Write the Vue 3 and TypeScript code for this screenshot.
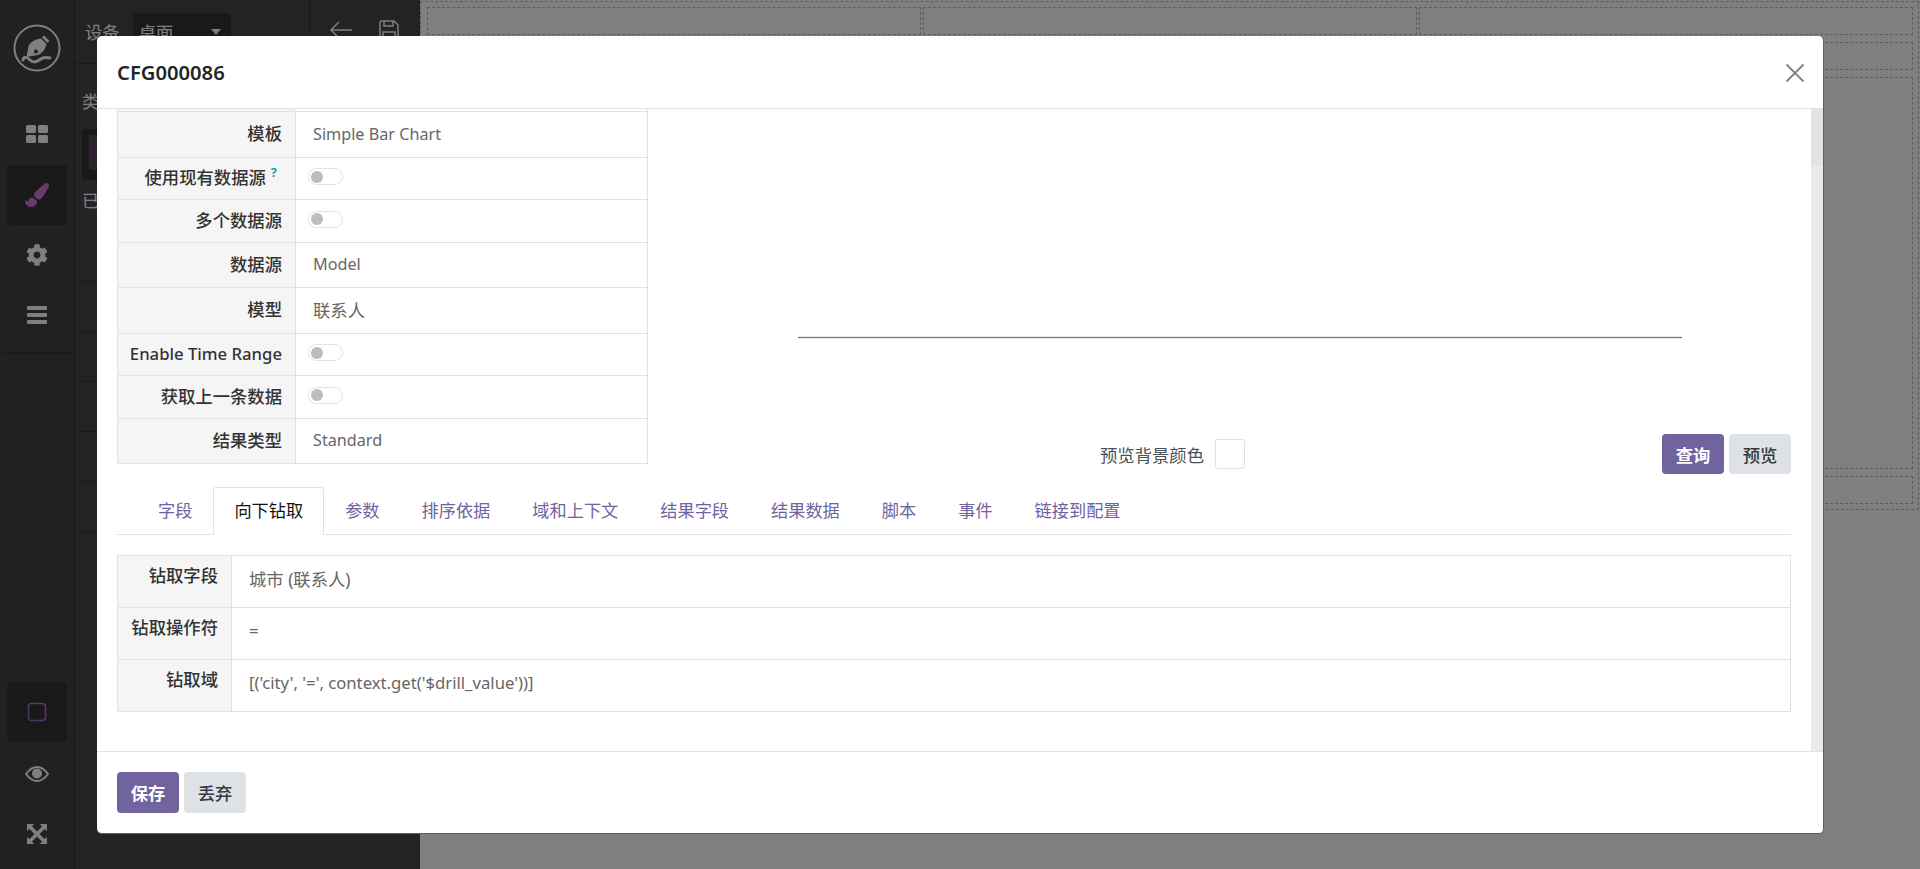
<script setup lang="ts">
interface FormRow { label: string; value?: string; toggle?: boolean; help?: boolean; height: number }
const formRows: FormRow[] = [
  { label: '模板', value: 'Simple Bar Chart', height: 46 },
  { label: '使用现有数据源', toggle: true, help: true, height: 42 },
  { label: '多个数据源', toggle: true, height: 43 },
  { label: '数据源', value: 'Model', height: 45 },
  { label: '模型', value: '联系人', height: 46 },
  { label: 'Enable Time Range', toggle: true, height: 42 },
  { label: '获取上一条数据', toggle: true, height: 43 },
  { label: '结果类型', value: 'Standard', height: 45 },
]
const isLatin = (text?: string): boolean => !!text && /^[\x20-\x7e]+$/.test(text)
const tabs = ['字段', '向下钻取', '参数', '排序依据', '域和上下文', '结果字段', '结果数据', '脚本', '事件', '链接到配置']
const drillRows = [
  { label: '钻取字段', value: '城市 (联系人)' },
  { label: '钻取操作符', value: '=' },
  { label: '钻取域', value: "[('city', '=', context.get('$drill_value'))]" },
]
const panelLines = [0, 1, 2, 3, 4, 5]
</script>

<template>
  <div class="page">
    <aside class="sidebar">
      <div class="side-top">
        <div class="logo">
          <svg width="48" height="48" viewBox="0 0 48 48" fill="none">
            <circle cx="24" cy="24" r="22.5" stroke="#fff" stroke-width="2" />
            <path d="M31 11.5 L36.5 17 L34.5 19 L29 13.5 Z" fill="#fff" />
            <path d="M28 14.5 L33.5 20 C32.5 25 29.5 29 25 31 L13.5 33 L15.5 22 C17.5 18 22.5 15 28 14.5 Z M23 25.5 a2 2 0 1 0 .01 0 Z" fill="#fff" fill-rule="evenodd" />
            <path d="M10 36 C11 32 14 33 17 36 C20 39 24 38 27 35.5 C30 33 33 33 37 34" stroke="#fff" stroke-width="3" stroke-linecap="round" />
          </svg>
        </div>
        <div class="side-item">
          <svg width="24" height="20" viewBox="0 0 24 20" fill="#fff">
            <rect x="1" y="1" width="10" height="8" rx="1.5" /><rect x="13" y="1" width="10" height="8" rx="1.5" />
            <rect x="1" y="11" width="10" height="8" rx="1.5" /><rect x="13" y="11" width="10" height="8" rx="1.5" />
          </svg>
        </div>
        <div class="side-item active">
          <svg width="24" height="24" viewBox="0 0 512 512" fill="#d676dc">
            <path d="M167.02 309.34c-40.12 2.58-76.53 17.86-97.19 72.3-2.35 6.21-8 9.98-14.59 9.98-11.11 0-45.46-27.67-55.25-34.35C0 439.62 37.93 512 128 512c75.86 0 128-43.77 128-120.19 0-3.11-.65-6.08-.97-9.13l-88.01-73.34zM457.89 0c-15.16 0-29.37 6.71-40.21 16.45C213.27 199.05 192 203.34 192 257.09c0 13.7 3.25 26.76 8.73 38.7l63.82 53.18c7.21 1.8 14.64 3.03 22.39 3.03 62.11 0 98.11-45.47 211.16-256.46 7.38-14.35 13.9-29.85 13.9-45.99C512 20.64 486 0 457.89 0z" />
          </svg>
        </div>
        <div class="side-item">
          <svg width="22" height="22" viewBox="0 0 512 512" fill="#fff">
            <path d="M487.4 315.7l-42.6-24.6c4.3-23.2 4.3-47 0-70.2l42.6-24.6c4.9-2.8 7.1-8.6 5.5-14-11.1-35.6-30-67.8-54.7-94.6-3.8-4.1-10-5.1-14.8-2.3L380.8 110c-17.9-15.4-38.5-27.3-60.8-35.1V25.8c0-5.6-3.9-10.5-9.4-11.7-36.7-8.2-74.3-7.8-109.2 0-5.5 1.2-9.4 6.1-9.4 11.7V75c-22.2 7.9-42.8 19.8-60.8 35.1L88.7 85.5c-4.9-2.8-11-1.9-14.8 2.3-24.7 26.7-43.6 58.9-54.7 94.6-1.7 5.4.6 11.2 5.5 14L67.3 221c-4.3 23.2-4.3 47 0 70.2l-42.6 24.6c-4.9 2.8-7.1 8.6-5.5 14 11.1 35.6 30 67.8 54.7 94.6 3.8 4.1 10 5.1 14.8 2.3l42.6-24.6c17.9 15.4 38.5 27.3 60.8 35.1v49.2c0 5.6 3.9 10.5 9.4 11.7 36.7 8.2 74.3 7.8 109.2 0 5.5-1.2 9.4-6.1 9.4-11.7v-49.2c22.2-7.9 42.8-19.8 60.8-35.1l42.6 24.6c4.9 2.8 11 1.9 14.8-2.3 24.7-26.7 43.6-58.9 54.7-94.6 1.5-5.5-.7-11.3-5.6-14.1zM256 336c-44.1 0-80-35.9-80-80s35.9-80 80-80 80 35.9 80 80-35.9 80-80 80z" />
          </svg>
        </div>
        <div class="side-item">
          <svg width="22" height="18" viewBox="0 0 22 18" fill="#fff">
            <rect x="1" y="0" width="20" height="4" rx="1" /><rect x="1" y="7" width="20" height="4" rx="1" /><rect x="1" y="14" width="20" height="4" rx="1" />
          </svg>
        </div>
      </div>
      <div class="side-bottom">
        <div class="side-item active">
          <svg width="20" height="20" viewBox="0 0 20 20" fill="none">
            <defs>
              <linearGradient id="sq" x1="0" y1="1" x2="1" y2="0">
                <stop offset="0" stop-color="#7b6fe0" />
                <stop offset="1" stop-color="#e060c0" />
              </linearGradient>
            </defs>
            <rect x="1.5" y="1.5" width="17" height="17" rx="3" stroke="url(#sq)" stroke-width="1.6" />
          </svg>
        </div>
        <div class="side-item">
          <svg width="24" height="16" viewBox="0 0 24 16" fill="none">
            <path d="M1 8 C5 2.5 8 1 12 1 C16 1 19 2.5 23 8 C19 13.5 16 15 12 15 C8 15 5 13.5 1 8 Z" stroke="#fff" stroke-width="2" />
            <circle cx="12" cy="7.5" r="5" fill="#fff" />
          </svg>
        </div>
        <div class="side-item">
          <svg width="22" height="22" viewBox="0 0 22 22" fill="#fff">
            <path d="M1 1h7L6 3.500 11 8.500 16 3.500 14 1h7v7l-2.500-2L13.500 11l5 5 2.500-2v7h-7l2-2.500-5-5-5 5 2 2.500H1v-7l2.500 2 5-5-5-5L1 8z" />
          </svg>
        </div>
      </div>
    </aside>

    <section class="panel">
      <div class="toolbar">
        <div class="device">
          <span>设备</span>
          <div class="device-select"><span>桌面</span><i class="caret"></i></div>
        </div>
        <div class="toolbar-actions">
          <svg width="24" height="20" viewBox="0 0 24 20" fill="none" stroke="#fff" stroke-width="1.500">
            <path d="M23 10H2M10 2 2 10l8 8" />
          </svg>
          <svg width="20" height="20" viewBox="0 0 20 20" fill="none" stroke="#fff" stroke-width="1.500">
            <path d="M1 3a2 2 0 0 1 2-2h12l4 4v12a2 2 0 0 1-2 2H3a2 2 0 0 1-2-2zM5 1v5h9V1M4 19v-7h12v7" />
          </svg>
        </div>
      </div>
      <div class="panel-body">
        <div class="panel-label">类</div>
        <div class="panel-card"><div class="panel-thumb"></div></div>
        <div class="panel-label">已</div>
      </div>
      <div class="panel-lines">
        <div v-for="line in panelLines" :key="line" class="panel-line"></div>
      </div>
    </section>

    <main class="canvas">
      <div class="outer">
        <div class="drop cols">
          <div class="drop-col"></div><div class="drop-col"></div><div class="drop-col"></div>
        </div>
        <div class="drop short"></div>
        <div class="drop tall"></div>
        <div class="drop short"></div>
      </div>
    </main>

    <div class="overlay">
      <div class="modal">
        <header class="modal-head">
          <h4>CFG000086</h4>
          <svg class="close" width="20" height="20" viewBox="0 0 20 20" stroke="#808080" stroke-width="1.800" fill="none">
            <path d="M1.500 1.500 18.500 18.500M18.500 1.500 1.500 18.500" />
          </svg>
        </header>

        <div class="modal-body">
          <div class="content">
            <div class="top">
              <table class="form">
                <colgroup><col class="form-label-col" /><col /></colgroup>
                <tbody>
                  <tr class="stub"><th></th><td></td></tr>
                  <tr v-for="row in formRows" :key="row.label" :style="{ height: row.height + 'px' }">
                    <th>
                      <span class="label-text" :class="{ 'latin-label': isLatin(row.label) }">{{ row.label }}</span><sup v-if="row.help" class="help">?</sup>
                    </th>
                    <td>
                      <span v-if="row.toggle" class="toggle"><i></i></span>
                      <span v-else class="value" :class="{ latin: isLatin(row.value) }">{{ row.value }}</span>
                    </td>
                  </tr>
                </tbody>
              </table>
              <div class="preview">
                <div class="chart"><div class="axis"></div></div>
                <div class="controls">
                  <div class="bg-control">
                    <span>预览背景颜色</span>
                    <span class="swatch"></span>
                  </div>
                  <div class="actions">
                    <button class="btn primary">查询</button>
                    <button class="btn secondary">预览</button>
                  </div>
                </div>
              </div>
            </div>

            <nav class="tabs">
              <a v-for="(tab, i) in tabs" :key="tab" class="tab" :class="{ current: i === 1 }">{{ tab }}</a>
            </nav>

            <table class="drill">
              <colgroup><col class="drill-label-col" /><col /></colgroup>
              <tbody>
                <tr v-for="row in drillRows" :key="row.label">
                  <th>{{ row.label }}</th>
                  <td><span :class="{ 'latin-mono': isLatin(row.value) }">{{ row.value }}</span></td>
                </tr>
              </tbody>
            </table>
          </div>
          <div class="scrollbar"><div class="thumb"></div></div>
        </div>

        <footer class="modal-foot">
          <button class="btn primary">保存</button>
          <button class="btn secondary">丢弃</button>
        </footer>
      </div>
    </div>
  </div>
</template>

<style>
html, body { margin: 0; padding: 0; overflow: hidden; }
</style>

<style scoped>
.page {
  position: relative;
  display: flex;
  width: 1920px;
  height: 869px;
  overflow: hidden;
  background: #fff;
  font-family: "Noto Sans", "Noto Sans CJK SC", sans-serif;
  font-size: 17.33px;
  color: #666;
}
.latin { font-size: 16.2px; }
.latin-label { font-size: 16.7px; }
.latin-mono { font-size: 16.7px; }
.sidebar {
  box-sizing: border-box;
  width: 75px;
  flex: none;
  display: flex;
  flex-direction: column;
  justify-content: space-between;
  background: #424242;
  border-right: 1px solid #333;
}
.side-top { border-bottom: 2px solid #383838; height: 352px; margin: 0 1px; }
.logo { height: 95px; display: flex; align-items: center; justify-content: center; padding-top: 1px; box-sizing: border-box; }
.side-item {
  width: 60px;
  height: 60px;
  margin: 0 auto;
  display: flex;
  align-items: center;
  justify-content: center;
  border-radius: 3px;
}
.side-item.active { background: #333; }
.side-top .side-item:nth-child(2) { margin-top: 9px; }
.side-top .side-item:nth-child(3) { margin-top: 1px; }
.side-bottom { padding-bottom: 5px; }
.side-bottom .side-item:first-child { margin-bottom: 2px; }

.panel {
  position: relative;
  box-sizing: border-box;
  width: 345px;
  flex: none;
  background: #464646;
  color: #fff;
}
.toolbar {
  box-sizing: border-box;
  height: 64px;
  display: flex;
  border-bottom: 1px solid #333;
}
.device {
  box-sizing: border-box;
  width: 235px;
  display: flex;
  align-items: center;
  padding: 2px 0 3px 10px;
  gap: 13px;
  border-right: 1px solid #333;
}
.device-select {
  box-sizing: border-box;
  width: 98px;
  height: 36px;
  display: flex;
  align-items: center;
  justify-content: space-between;
  padding: 0 10px 0 6px;
  background: #333;
  border-radius: 3px;
}
.caret { border: 5px solid transparent; border-top: 6px solid #fff; margin-top: 6px; }
.toolbar-actions { display: flex; align-items: center; gap: 26px; padding: 0 0 4px 19px; }
.panel-body { box-sizing: border-box; height: 168px; padding: 25px 7px 0; background: #484848; }
.panel-label { line-height: 24px; }
.panel-card { height: 51px; margin: 16px 0 8px; padding: 6px 7px; background: #333; border-radius: 3px; box-sizing: border-box; }
.panel-thumb { width: 30px; height: 35px; background: #5e445f; border-radius: 3px; }
.panel-lines { padding-top: 49px; }
.panel-line { height: 49px; border-top: 1px solid #363636; }

.canvas { flex: 1; min-width: 0; padding: 1px 1px 0 0; }
.outer {
  box-sizing: border-box;
  height: 509px;
  border: 1px dashed #bbb;
  padding: 5px 5px 5px 6px;
  display: flex;
  flex-direction: column;
  gap: 7px;
}
.drop { box-sizing: border-box; border: 1px dashed #bbb; height: 28px; flex: none; }
.drop.tall { height: 392px; }
.drop.cols { display: flex; border: 0; gap: 2px; }
.drop-col { flex: 1; border: 1px dashed #bbb; }

.overlay {
  position: absolute;
  inset: 0;
  background: rgba(0, 0, 0, .5);
}
.modal {
  box-sizing: border-box;
  position: absolute;
  left: 97px;
  top: 36px;
  width: 1727px;
  height: 798px;
  display: flex;
  flex-direction: column;
  background: #fff;
  border-radius: 5px;
  border-right: 1px solid #5e5e5e;
  border-bottom: 1px solid #5e5e5e;
  overflow: hidden;
}
.modal-head {
  box-sizing: border-box;
  height: 73px;
  flex: none;
  display: flex;
  align-items: center;
  justify-content: space-between;
  padding: 0 18px 0 20px;
  border-bottom: 1px solid #dee2e6;
}
.modal-head h4 {
  margin: 0;
  font-size: 20.2px;
  font-weight: 600;
  color: #212529;
}
.close { display: block; margin-top: 1px; }
.modal-body { flex: 1; min-height: 0; display: flex; }
.content { flex: 1; min-width: 0; padding: 0 20px; }
.scrollbar { width: 12px; flex: none; background: #eaeaea; }
.thumb { height: 57px; background: #e3e3e3; }

.top { display: flex; height: 365px; }
.form, .drill { border-collapse: collapse; table-layout: fixed; }
.form { width: 531px; height: fit-content; flex: none; }
.form-label-col { width: 178px; }
.form tr.stub { height: 2px; }
.form tr.stub th, .form tr.stub td { padding: 0; border-top: 0; height: 2px; line-height: 0; font-size: 0; }
th, td { border: 1px solid #e2e2e2; }
th {
  background: #f5f5f5;
  text-align: right;
  font-weight: 500;
  color: #333;
  padding: 0 13px 0 0;
}
.form th { padding-bottom: 4px; }
.form td { padding: 0 0 0 17px; font-weight: 400; color: #666; }
.form tr th { white-space: nowrap; }
.value { display: block; margin-top: -2px; }
.help { color: #17a2b8; font-size: 13px; font-weight: 700; vertical-align: 7px; line-height: 0; margin-left: 5px; margin-right: 5px; }
.toggle {
  box-sizing: border-box;
  display: flex;
  align-items: center;
  width: 35px;
  height: 17px;
  margin: 0 0 4px -5px;
  padding-left: 2px;
  background: #fff;
  border: 1px solid #e2e2e2;
  border-radius: 9px;
}
.toggle i { width: 12px; height: 12px; border-radius: 50%; background: #bdbdbd; }

.preview { flex: 1; min-width: 0; padding-left: 40px; display: flex; flex-direction: column; }
.chart { height: 325px; box-sizing: border-box; padding: 227px 109px 0 110px; flex: none; }
.axis { height: 1px; background: #777; border-top: 1px solid #e6e6e6; border-bottom: 1px solid #e6e6e6; }
.controls { display: flex; align-items: center; height: 40px; }
.bg-control { display: flex; align-items: center; gap: 11px; margin-left: 412px; color: #495057; }
.swatch { box-sizing: border-box; width: 30px; height: 30px; border: 1px solid #dee2e6; border-radius: 3px; background: #fff; }
.actions { margin-left: auto; display: flex; gap: 5px; }
.btn {
  box-sizing: border-box;
  width: 62px;
  height: 40px;
  padding: 0;
  border: 0;
  border-radius: 4px;
  font: inherit;
  font-weight: 600;
}
.btn.primary { background: #71639e; color: #fff; }
.btn.secondary { background: #dee2e6; color: #343a40; font-weight: 500; }

.tabs {
  display: flex;
  box-sizing: border-box;
  height: 48px;
  margin-top: 13px;
  padding-left: 20px;
  border-bottom: 1px solid #dee2e6;
  font-size: 17.2px;
}
.tab {
  box-sizing: border-box;
  height: 48px;
  padding: 0 20px;
  line-height: 46px;
  border: 1px solid transparent;
  border-radius: 3px 3px 0 0;
  color: #71639e;
}
.tab.current { color: #111; background: #fff; border-color: #dee2e6 #dee2e6 #fff; }

.drill { width: 100%; margin-top: 20px; }
.drill-label-col { width: 114px; }
.drill tr { height: 52px; }
.drill th { vertical-align: top; padding: 6px 13px 0 0; }
.drill td { padding: 0 0 7px 17px; color: #666; }

.modal-foot {
  box-sizing: border-box;
  height: 82px;
  flex: none;
  display: flex;
  gap: 5px;
  padding: 20px 20px 0;
  border-top: 1px solid #e2e2e2;
}
.modal-foot .btn { height: 41px; }
</style>
